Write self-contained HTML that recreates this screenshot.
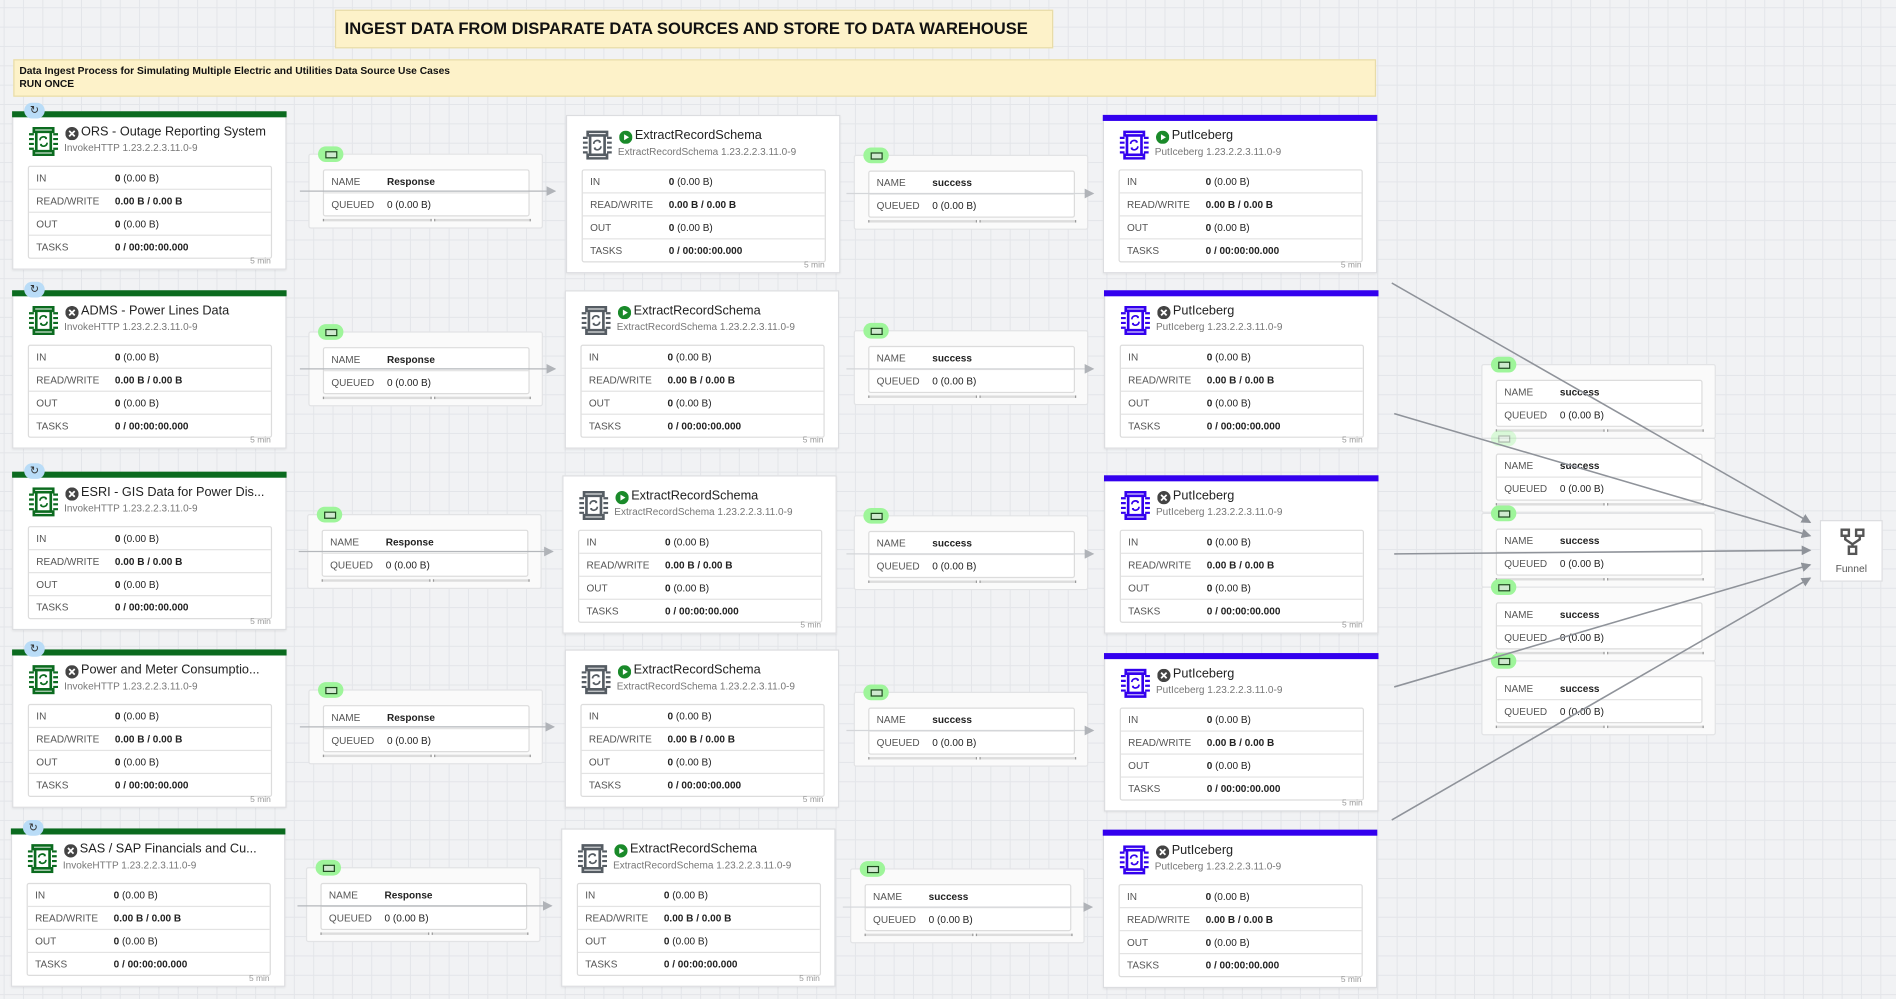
<!DOCTYPE html>
<html><head><meta charset="utf-8">
<style>
html,body{margin:0;padding:0;width:1896px;height:999px;overflow:hidden;background:#f1f2f4}
#w{position:absolute;left:0;top:0;width:1568px;height:826px;transform:scale(1.2092,1.2094);transform-origin:0 0;font-family:"Liberation Sans",sans-serif;
background-color:#f1f2f4;background-image:linear-gradient(#e3e5e9 1px,transparent 1px),linear-gradient(90deg,#e3e5e9 1px,transparent 1px);background-size:16px 16px;background-position:3px 6px}
.lbl{position:absolute;background:#fdf2c9;border:1px solid #e8dca8;box-sizing:border-box}
.card{position:absolute;width:227px;height:131px;background:#fff;border:1px solid #dcdde0;box-sizing:border-box;box-shadow:0 1px 2px rgba(0,0,0,.08)}
.bar{position:absolute;left:-1px;right:-1px;top:-1px;height:5px}
.g .bar{background:#0b6b1f}.b .bar{background:#3300ee}
.rb{position:absolute;left:9px;top:-8px;width:17px;height:13px;border-radius:7px;background:#b9dcf7;text-align:center;font-size:9px;line-height:13px;color:#333}
.ic{position:absolute;left:13px;top:12px;width:24px;height:24px}
.st{position:absolute;left:43px;top:12px;width:11px;height:11px}
.t{position:absolute;left:56px;top:10px;font-size:10.5px;color:#222;white-space:nowrap}
.s{position:absolute;left:42px;top:24px;font-size:8.3px;color:#777;white-space:nowrap}
.tb{position:absolute;left:12px;top:44px;width:202px;border:1px solid #dcdcdc;border-radius:2px;box-sizing:border-box}
.tb div,.ct div{height:18px;line-height:18px;border-top:1px solid #e3e3e3;position:relative;padding-left:6px;color:#555;font-size:8.3px}
.tb div:first-child,.ct div:first-child{border-top:0}
.tb i,.ct i{position:absolute;left:71px;font-style:normal;color:#222}
.ct i{left:52px}
.m{position:absolute;right:12px;bottom:2px;font-size:7px;color:#999}
.cn{position:absolute;width:194px;height:62px;background:#fafafa;border:1px solid #e2e3e5;border-radius:2px;box-sizing:border-box}
.bd{position:absolute;left:7px;top:-7px;width:21px;height:13px;border-radius:7px;background:#9ef59a}
.bd:after{content:"";position:absolute;left:6px;top:4px;width:8px;height:4px;border:1px solid #1e4b1e;background:#cfe9cf}
.ct{position:absolute;left:11px;top:12px;width:171px;border:1px solid #dcdcdc;background:#fff;border-radius:2px;box-sizing:border-box}
.b1,.b2{position:absolute;top:53px;height:2px;background:#ddd;border-left:1px solid #999;border-right:1px solid #999}
.b1{left:11px;width:88px}.b2{left:103px;width:78px}
</style></head><body>
<svg width="0" height="0" style="position:absolute">
<defs>
<symbol id="chip" viewBox="0 0 24 24"><path d="M4 1h16v3H4zM4 20h16v3H4zM6 4h12v16H6z" fill="none" stroke="currentColor" stroke-width="2.2"/><path d="M0 6h4M0 10h4M0 14h4M0 18h4M20 6h4M20 10h4M20 14h4M20 18h4" stroke="currentColor" stroke-width="1.8"/><path d="M9 11a3 3 0 0 1 5.5-1.5M15 13a3 3 0 0 1-5.5 1.5" fill="none" stroke="currentColor" stroke-width="1.4"/><path d="M14 8l1 2-2 0zM10 16l-1-2 2 0z" fill="currentColor"/></symbol>
<symbol id="x" viewBox="0 0 12 12"><circle cx="6" cy="6" r="6" fill="#444"/><path d="M3.5 3.5l5 5M8.5 3.5l-5 5" stroke="#fff" stroke-width="1.6"/></symbol>
<symbol id="p" viewBox="0 0 12 12"><circle cx="6" cy="6" r="6" fill="#1a8a2a"/><path d="M4.5 3.3v5.4L9 6z" fill="#fff"/></symbol>
</defs></svg>
<div id="w">
<div class="lbl" style="left:277px;top:8px;width:594px;height:32px"><div style="position:absolute;left:7px;top:7px;font-size:13.7px;font-weight:bold;color:#111">INGEST DATA FROM DISPARATE DATA SOURCES AND STORE TO DATA WAREHOUSE</div></div>
<div class="lbl" style="left:11px;top:49px;width:1127px;height:31px"><div style="position:absolute;left:4px;top:3px;font-size:8.5px;font-weight:bold;color:#111;line-height:11px">Data Ingest Process for Simulating Multiple Electric and Utilities Data Source Use Cases<br>RUN ONCE</div></div>

<!-- column 1 -->
<div class="card g" style="left:10px;top:92px"><div class="bar"></div><div class="rb">↻</div><svg class="ic" style="color:#0b6b1f"><use href="#chip"/></svg><svg class="st"><use href="#x"/></svg><div class="t">ORS - Outage Reporting System</div><div class="s">InvokeHTTP 1.23.2.2.3.11.0-9</div><div class="tb"><div>IN<i><b>0</b> (0.00 B)</i></div><div>READ/WRITE<i><b>0.00 B / 0.00 B</b></i></div><div>OUT<i><b>0</b> (0.00 B)</i></div><div>TASKS<i><b>0 / 00:00:00.000</b></i></div></div><div class="m">5 min</div></div>
<div class="card g" style="left:10px;top:240px"><div class="bar"></div><div class="rb">↻</div><svg class="ic" style="color:#0b6b1f"><use href="#chip"/></svg><svg class="st"><use href="#x"/></svg><div class="t">ADMS - Power Lines Data</div><div class="s">InvokeHTTP 1.23.2.2.3.11.0-9</div><div class="tb"><div>IN<i><b>0</b> (0.00 B)</i></div><div>READ/WRITE<i><b>0.00 B / 0.00 B</b></i></div><div>OUT<i><b>0</b> (0.00 B)</i></div><div>TASKS<i><b>0 / 00:00:00.000</b></i></div></div><div class="m">5 min</div></div>
<div class="card g" style="left:10px;top:390px"><div class="bar"></div><div class="rb">↻</div><svg class="ic" style="color:#0b6b1f"><use href="#chip"/></svg><svg class="st"><use href="#x"/></svg><div class="t">ESRI - GIS Data for Power Dis...</div><div class="s">InvokeHTTP 1.23.2.2.3.11.0-9</div><div class="tb"><div>IN<i><b>0</b> (0.00 B)</i></div><div>READ/WRITE<i><b>0.00 B / 0.00 B</b></i></div><div>OUT<i><b>0</b> (0.00 B)</i></div><div>TASKS<i><b>0 / 00:00:00.000</b></i></div></div><div class="m">5 min</div></div>
<div class="card g" style="left:10px;top:537px"><div class="bar"></div><div class="rb">↻</div><svg class="ic" style="color:#0b6b1f"><use href="#chip"/></svg><svg class="st"><use href="#x"/></svg><div class="t">Power and Meter Consumptio...</div><div class="s">InvokeHTTP 1.23.2.2.3.11.0-9</div><div class="tb"><div>IN<i><b>0</b> (0.00 B)</i></div><div>READ/WRITE<i><b>0.00 B / 0.00 B</b></i></div><div>OUT<i><b>0</b> (0.00 B)</i></div><div>TASKS<i><b>0 / 00:00:00.000</b></i></div></div><div class="m">5 min</div></div>
<div class="card g" style="left:9px;top:685px"><div class="bar"></div><div class="rb">↻</div><svg class="ic" style="color:#0b6b1f"><use href="#chip"/></svg><svg class="st"><use href="#x"/></svg><div class="t">SAS / SAP Financials and Cu...</div><div class="s">InvokeHTTP 1.23.2.2.3.11.0-9</div><div class="tb"><div>IN<i><b>0</b> (0.00 B)</i></div><div>READ/WRITE<i><b>0.00 B / 0.00 B</b></i></div><div>OUT<i><b>0</b> (0.00 B)</i></div><div>TASKS<i><b>0 / 00:00:00.000</b></i></div></div><div class="m">5 min</div></div>

<!-- column 2 connections -->
<div class="cn" style="left:255px;top:127px"><div class="bd"></div><div class="ct"><div>NAME<i><b>Response</b></i></div><div>QUEUED<i>0 (0.00 B)</i></div></div><div class="b1"></div><div class="b2"></div></div>
<div class="cn" style="left:255px;top:274px"><div class="bd"></div><div class="ct"><div>NAME<i><b>Response</b></i></div><div>QUEUED<i>0 (0.00 B)</i></div></div><div class="b1"></div><div class="b2"></div></div>
<div class="cn" style="left:254px;top:425px"><div class="bd"></div><div class="ct"><div>NAME<i><b>Response</b></i></div><div>QUEUED<i>0 (0.00 B)</i></div></div><div class="b1"></div><div class="b2"></div></div>
<div class="cn" style="left:255px;top:570px"><div class="bd"></div><div class="ct"><div>NAME<i><b>Response</b></i></div><div>QUEUED<i>0 (0.00 B)</i></div></div><div class="b1"></div><div class="b2"></div></div>
<div class="cn" style="left:253px;top:717px"><div class="bd"></div><div class="ct"><div>NAME<i><b>Response</b></i></div><div>QUEUED<i>0 (0.00 B)</i></div></div><div class="b1"></div><div class="b2"></div></div>

<!-- column 3 -->
<div class="card" style="left:468px;top:95px"><svg class="ic" style="color:#555c63"><use href="#chip"/></svg><svg class="st"><use href="#p"/></svg><div class="t">ExtractRecordSchema</div><div class="s">ExtractRecordSchema 1.23.2.2.3.11.0-9</div><div class="tb"><div>IN<i><b>0</b> (0.00 B)</i></div><div>READ/WRITE<i><b>0.00 B / 0.00 B</b></i></div><div>OUT<i><b>0</b> (0.00 B)</i></div><div>TASKS<i><b>0 / 00:00:00.000</b></i></div></div><div class="m">5 min</div></div>
<div class="card" style="left:467px;top:240px"><svg class="ic" style="color:#555c63"><use href="#chip"/></svg><svg class="st"><use href="#p"/></svg><div class="t">ExtractRecordSchema</div><div class="s">ExtractRecordSchema 1.23.2.2.3.11.0-9</div><div class="tb"><div>IN<i><b>0</b> (0.00 B)</i></div><div>READ/WRITE<i><b>0.00 B / 0.00 B</b></i></div><div>OUT<i><b>0</b> (0.00 B)</i></div><div>TASKS<i><b>0 / 00:00:00.000</b></i></div></div><div class="m">5 min</div></div>
<div class="card" style="left:465px;top:393px"><svg class="ic" style="color:#555c63"><use href="#chip"/></svg><svg class="st"><use href="#p"/></svg><div class="t">ExtractRecordSchema</div><div class="s">ExtractRecordSchema 1.23.2.2.3.11.0-9</div><div class="tb"><div>IN<i><b>0</b> (0.00 B)</i></div><div>READ/WRITE<i><b>0.00 B / 0.00 B</b></i></div><div>OUT<i><b>0</b> (0.00 B)</i></div><div>TASKS<i><b>0 / 00:00:00.000</b></i></div></div><div class="m">5 min</div></div>
<div class="card" style="left:467px;top:537px"><svg class="ic" style="color:#555c63"><use href="#chip"/></svg><svg class="st"><use href="#p"/></svg><div class="t">ExtractRecordSchema</div><div class="s">ExtractRecordSchema 1.23.2.2.3.11.0-9</div><div class="tb"><div>IN<i><b>0</b> (0.00 B)</i></div><div>READ/WRITE<i><b>0.00 B / 0.00 B</b></i></div><div>OUT<i><b>0</b> (0.00 B)</i></div><div>TASKS<i><b>0 / 00:00:00.000</b></i></div></div><div class="m">5 min</div></div>
<div class="card" style="left:464px;top:685px"><svg class="ic" style="color:#555c63"><use href="#chip"/></svg><svg class="st"><use href="#p"/></svg><div class="t">ExtractRecordSchema</div><div class="s">ExtractRecordSchema 1.23.2.2.3.11.0-9</div><div class="tb"><div>IN<i><b>0</b> (0.00 B)</i></div><div>READ/WRITE<i><b>0.00 B / 0.00 B</b></i></div><div>OUT<i><b>0</b> (0.00 B)</i></div><div>TASKS<i><b>0 / 00:00:00.000</b></i></div></div><div class="m">5 min</div></div>

<!-- column 4 connections -->
<div class="cn" style="left:706px;top:128px"><div class="bd"></div><div class="ct"><div>NAME<i><b>success</b></i></div><div>QUEUED<i>0 (0.00 B)</i></div></div><div class="b1"></div><div class="b2"></div></div>
<div class="cn" style="left:706px;top:273px"><div class="bd"></div><div class="ct"><div>NAME<i><b>success</b></i></div><div>QUEUED<i>0 (0.00 B)</i></div></div><div class="b1"></div><div class="b2"></div></div>
<div class="cn" style="left:706px;top:426px"><div class="bd"></div><div class="ct"><div>NAME<i><b>success</b></i></div><div>QUEUED<i>0 (0.00 B)</i></div></div><div class="b1"></div><div class="b2"></div></div>
<div class="cn" style="left:706px;top:572px"><div class="bd"></div><div class="ct"><div>NAME<i><b>success</b></i></div><div>QUEUED<i>0 (0.00 B)</i></div></div><div class="b1"></div><div class="b2"></div></div>
<div class="cn" style="left:703px;top:718px"><div class="bd"></div><div class="ct"><div>NAME<i><b>success</b></i></div><div>QUEUED<i>0 (0.00 B)</i></div></div><div class="b1"></div><div class="b2"></div></div>

<!-- column 5 -->
<div class="card b" style="left:912px;top:95px"><div class="bar"></div><svg class="ic" style="color:#3300ee"><use href="#chip"/></svg><svg class="st"><use href="#p"/></svg><div class="t">PutIceberg</div><div class="s">PutIceberg 1.23.2.2.3.11.0-9</div><div class="tb"><div>IN<i><b>0</b> (0.00 B)</i></div><div>READ/WRITE<i><b>0.00 B / 0.00 B</b></i></div><div>OUT<i><b>0</b> (0.00 B)</i></div><div>TASKS<i><b>0 / 00:00:00.000</b></i></div></div><div class="m">5 min</div></div>
<div class="card b" style="left:913px;top:240px"><div class="bar"></div><svg class="ic" style="color:#3300ee"><use href="#chip"/></svg><svg class="st"><use href="#x"/></svg><div class="t">PutIceberg</div><div class="s">PutIceberg 1.23.2.2.3.11.0-9</div><div class="tb"><div>IN<i><b>0</b> (0.00 B)</i></div><div>READ/WRITE<i><b>0.00 B / 0.00 B</b></i></div><div>OUT<i><b>0</b> (0.00 B)</i></div><div>TASKS<i><b>0 / 00:00:00.000</b></i></div></div><div class="m">5 min</div></div>
<div class="card b" style="left:913px;top:393px"><div class="bar"></div><svg class="ic" style="color:#3300ee"><use href="#chip"/></svg><svg class="st"><use href="#x"/></svg><div class="t">PutIceberg</div><div class="s">PutIceberg 1.23.2.2.3.11.0-9</div><div class="tb"><div>IN<i><b>0</b> (0.00 B)</i></div><div>READ/WRITE<i><b>0.00 B / 0.00 B</b></i></div><div>OUT<i><b>0</b> (0.00 B)</i></div><div>TASKS<i><b>0 / 00:00:00.000</b></i></div></div><div class="m">5 min</div></div>
<div class="card b" style="left:913px;top:540px"><div class="bar"></div><svg class="ic" style="color:#3300ee"><use href="#chip"/></svg><svg class="st"><use href="#x"/></svg><div class="t">PutIceberg</div><div class="s">PutIceberg 1.23.2.2.3.11.0-9</div><div class="tb"><div>IN<i><b>0</b> (0.00 B)</i></div><div>READ/WRITE<i><b>0.00 B / 0.00 B</b></i></div><div>OUT<i><b>0</b> (0.00 B)</i></div><div>TASKS<i><b>0 / 00:00:00.000</b></i></div></div><div class="m">5 min</div></div>
<div class="card b" style="left:912px;top:686px"><div class="bar"></div><svg class="ic" style="color:#3300ee"><use href="#chip"/></svg><svg class="st"><use href="#x"/></svg><div class="t">PutIceberg</div><div class="s">PutIceberg 1.23.2.2.3.11.0-9</div><div class="tb"><div>IN<i><b>0</b> (0.00 B)</i></div><div>READ/WRITE<i><b>0.00 B / 0.00 B</b></i></div><div>OUT<i><b>0</b> (0.00 B)</i></div><div>TASKS<i><b>0 / 00:00:00.000</b></i></div></div><div class="m">5 min</div></div>

<!-- column 6 stacked -->
<div class="cn" style="left:1225px;top:301px"><div class="bd"></div><div class="ct"><div>NAME<i><b>success</b></i></div><div>QUEUED<i>0 (0.00 B)</i></div></div><div class="b1"></div><div class="b2"></div></div>
<div class="cn" style="left:1225px;top:362px"><div class="bd" style="opacity:.35"></div><div class="ct"><div>NAME<i><b>success</b></i></div><div>QUEUED<i>0 (0.00 B)</i></div></div><div class="b1"></div><div class="b2"></div></div>
<div class="cn" style="left:1225px;top:424px"><div class="bd"></div><div class="ct"><div>NAME<i><b>success</b></i></div><div>QUEUED<i>0 (0.00 B)</i></div></div><div class="b1"></div><div class="b2"></div></div>
<div class="cn" style="left:1225px;top:485px"><div class="bd"></div><div class="ct"><div>NAME<i><b>success</b></i></div><div>QUEUED<i>0 (0.00 B)</i></div></div><div class="b1"></div><div class="b2"></div></div>
<div class="cn" style="left:1225px;top:546px"><div class="bd"></div><div class="ct"><div>NAME<i><b>success</b></i></div><div>QUEUED<i>0 (0.00 B)</i></div></div><div class="b1"></div><div class="b2"></div></div>

<!-- funnel -->
<div style="position:absolute;left:1505px;top:430px;width:52px;height:51px;background:#fff;border:1px solid #dcdde0;box-sizing:border-box">
<svg style="position:absolute;left:16px;top:6px" width="20" height="22" viewBox="0 0 20 22"><rect x="1" y="1" width="6" height="5" fill="none" stroke="#555" stroke-width="2"/><rect x="13" y="1" width="6" height="5" fill="none" stroke="#555" stroke-width="2"/><path d="M4 6v3l6 4 6-4V6M10 13v2" fill="none" stroke="#555" stroke-width="2"/><rect x="7" y="15" width="6" height="6" fill="none" stroke="#555" stroke-width="2"/></svg>
<div style="position:absolute;left:0;right:0;top:34px;text-align:center;font-size:8.5px;color:#555">Funnel</div></div>

<svg style="position:absolute;left:0;top:0" width="1568" height="826">
<defs><marker id="a" markerWidth="8" markerHeight="8" refX="7" refY="4" orient="auto" markerUnits="userSpaceOnUse"><path d="M0 0L8 4L0 8z" fill="#8f939a"/></marker>
<marker id="a2" markerWidth="8" markerHeight="8" refX="7" refY="4" orient="auto" markerUnits="userSpaceOnUse"><path d="M0 0L8 4L0 8z" fill="#b0b3b8"/></marker></defs>
<g stroke="#b4b7bb" stroke-width="1" marker-end="url(#a2)">
<path d="M248 158H459"/><path d="M248 305H459"/><path d="M247 456H457"/><path d="M248 601H458"/><path d="M246 749H456"/>
<path d="M700 160H904" stroke="#d4d6d9"/><path d="M700 305H904" stroke="#d4d6d9"/><path d="M700 458H904" stroke="#d4d6d9"/><path d="M700 604H904" stroke="#d4d6d9"/><path d="M697 750H903" stroke="#d4d6d9"/>
</g>
<g stroke="#8f939a" stroke-width="1.3" marker-end="url(#a)" fill="none">
<path d="M1151 234L1497 432"/><path d="M1153 342L1497 443"/><path d="M1153 458L1497 455"/><path d="M1153 568L1497 467"/><path d="M1151 678L1497 478"/>
</g>
</svg>
</div>
</body></html>
